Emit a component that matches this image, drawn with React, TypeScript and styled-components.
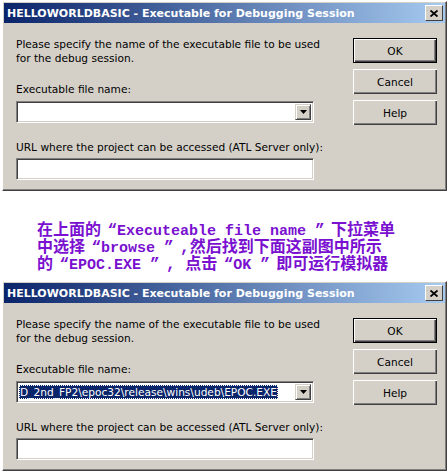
import React from "react";
import styled, { createGlobalStyle } from "styled-components";

const GlobalStyle = createGlobalStyle`
    body {
        margin: 0;
        background: #ffffff;
    }
`;

const Page = styled.div`
    width: 448px;
    height: 472px;
    overflow: hidden;
    padding-top: 1px;
    box-sizing: border-box;
`;

const Dialog = styled.div`
    margin-left: 2px;
    width: 445px;
    background: #d4d0c8;
    border-top: 1px solid #ffffff;
    border-left: 1px solid #ffffff;
    border-right: 1px solid #404040;
    border-bottom: 1px solid #404040;
    box-shadow: inset -1px -1px 0 #808080;
    box-sizing: border-box;
    font-family: "DejaVu Sans", Tahoma, sans-serif;
`;

const TitleBar = styled.div`
    height: 20px;
    margin: 1px;
    display: flex;
    align-items: center;
    justify-content: space-between;
    padding: 0 2px 0 3px;
    background: linear-gradient(to right, #0a246a, #a6caf0);
    color: #ffffff;
    font-weight: bold;
    font-size: 11px;
`;

const CloseButton = styled.div`
    width: 16px;
    height: 14px;
    background: #d4d0c8;
    border-top: 1px solid #ffffff;
    border-left: 1px solid #ffffff;
    border-right: 1px solid #404040;
    border-bottom: 1px solid #404040;
    display: flex;
    align-items: center;
    justify-content: center;
`;

const Body = styled.div`
    display: flex;
    justify-content: space-between;
    padding: 13px 9px 10px 13px;
`;

const Fields = styled.div`
    display: flex;
    flex-direction: column;
    width: 298px;
    font-size: 10.6px;
    color: #000000;
`;

const Text = styled.div<{ $gap?: number }>`
    line-height: 14px;
    margin-top: ${(p) => p.$gap ?? 0}px;
    white-space: nowrap;
`;

const Sunken = styled.div<{ $gap?: number }>`
    margin-top: ${(p) => p.$gap ?? 4}px;
    height: 22px;
    background: #ffffff;
    border-top: 1px solid #808080;
    border-left: 1px solid #808080;
    border-right: 1px solid #ffffff;
    border-bottom: 1px solid #ffffff;
    box-shadow: inset 1px 1px 0 #404040, inset -1px -1px 0 #d4d0c8;
    box-sizing: border-box;
    display: flex;
    align-items: center;
    padding: 2px;
    overflow: hidden;
`;

const ComboText = styled.div`
    flex: 1;
    height: 100%;
    overflow: hidden;
    display: flex;
    align-items: center;
`;

const Selected = styled.span`
    background: #0a246a;
    color: #ffffff;
    line-height: 14px;
    padding: 0 1px;
    white-space: nowrap;
    outline: 1px dotted #ffffff;
    outline-offset: -1px;
`;

const DropButton = styled.div`
    width: 16px;
    height: 100%;
    box-sizing: border-box;
    background: #d4d0c8;
    border-top: 1px solid #d4d0c8;
    border-left: 1px solid #d4d0c8;
    border-right: 1px solid #404040;
    border-bottom: 1px solid #404040;
    box-shadow: inset 1px 1px 0 #ffffff, inset -1px -1px 0 #808080;
    display: flex;
    align-items: center;
    justify-content: center;
`;

const Buttons = styled.div`
    display: flex;
    flex-direction: column;
    gap: 6px;
    padding-top: 1px;
`;

const Button = styled.div<{ $default?: boolean }>`
    width: 84px;
    height: 25px;
    box-sizing: border-box;
    display: flex;
    align-items: center;
    justify-content: center;
    font-size: 10.6px;
    background: #d4d0c8;
    border: ${(p) => (p.$default ? "1px solid #000000" : "none")};
    box-shadow: inset 1px 1px 0 #ffffff, inset -1px -1px 0 #404040,
        inset -2px -2px 0 #808080;
`;

const Caption = styled.div`
    margin: 32px 0 7px 37px;
    color: #7a10d0;
    font-weight: bold;
    font-size: 16px;
    line-height: 17px;
    font-family: "Liberation Mono", "Noto Sans CJK SC", monospace;
    white-space: nowrap;
`;

const Latin = styled.span`
    font-size: 15px;
`;

const Quote = styled.span<{ $open?: boolean }>`
    display: inline-block;
    width: 16px;
    text-align: ${(p) => (p.$open ? "right" : "left")};
`;

const Arrow = () => (
    <svg width="7" height="4" viewBox="0 0 7 4">
        <path d="M0 0h7L3.5 4z" fill="#000" />
    </svg>
);

const CloseX = () => (
    <svg width="8" height="7" viewBox="0 0 8 7">
        <path d="M0.5 0.5L7.5 6.5M7.5 0.5L0.5 6.5" stroke="#000" strokeWidth="1.8" />
    </svg>
);

const DebugDialog: React.FC<{ path?: string }> = ({ path }) => (
    <Dialog>
        <TitleBar>
            <span>HELLOWORLDBASIC - Executable for Debugging Session</span>
            <CloseButton>
                <CloseX />
            </CloseButton>
        </TitleBar>
        <Body>
            <Fields>
                <Text>Please specify the name of the executable file to be used</Text>
                <Text>for the debug session.</Text>
                <Text $gap={17}>Executable file name:</Text>
                <Sunken $gap={5}>
                    <ComboText>{path && <Selected>{path}</Selected>}</ComboText>
                    <DropButton>
                        <Arrow />
                    </DropButton>
                </Sunken>
                <Text $gap={17}>URL where the project can be accessed (ATL Server only):</Text>
                <Sunken $gap={4} />
            </Fields>
            <Buttons>
                <Button $default>OK</Button>
                <Button>Cancel</Button>
                <Button>Help</Button>
            </Buttons>
        </Body>
    </Dialog>
);

const App: React.FC = () => (
    <Page>
        <GlobalStyle />
        <DebugDialog />
        <Caption>
            <div>
                在上面的<Quote $open>“</Quote>
                <Latin>Executeable file name </Latin>
                <Quote>”</Quote>下拉菜单
            </div>
            <div>
                中选择<Quote $open>“</Quote>
                <Latin>browse </Latin>
                <Quote>”</Quote>,然后找到下面这副图中所示
            </div>
            <div>
                的<Quote $open>“</Quote>
                <Latin>EPOC.EXE </Latin>
                <Quote>”</Quote>, 点击<Quote $open>“</Quote>
                <Latin>OK </Latin>
                <Quote>”</Quote>即可运行模拟器
            </div>
        </Caption>
        <DebugDialog path="D_2nd_FP2\epoc32\release\wins\udeb\EPOC.EXE" />
    </Page>
);

export default App;
